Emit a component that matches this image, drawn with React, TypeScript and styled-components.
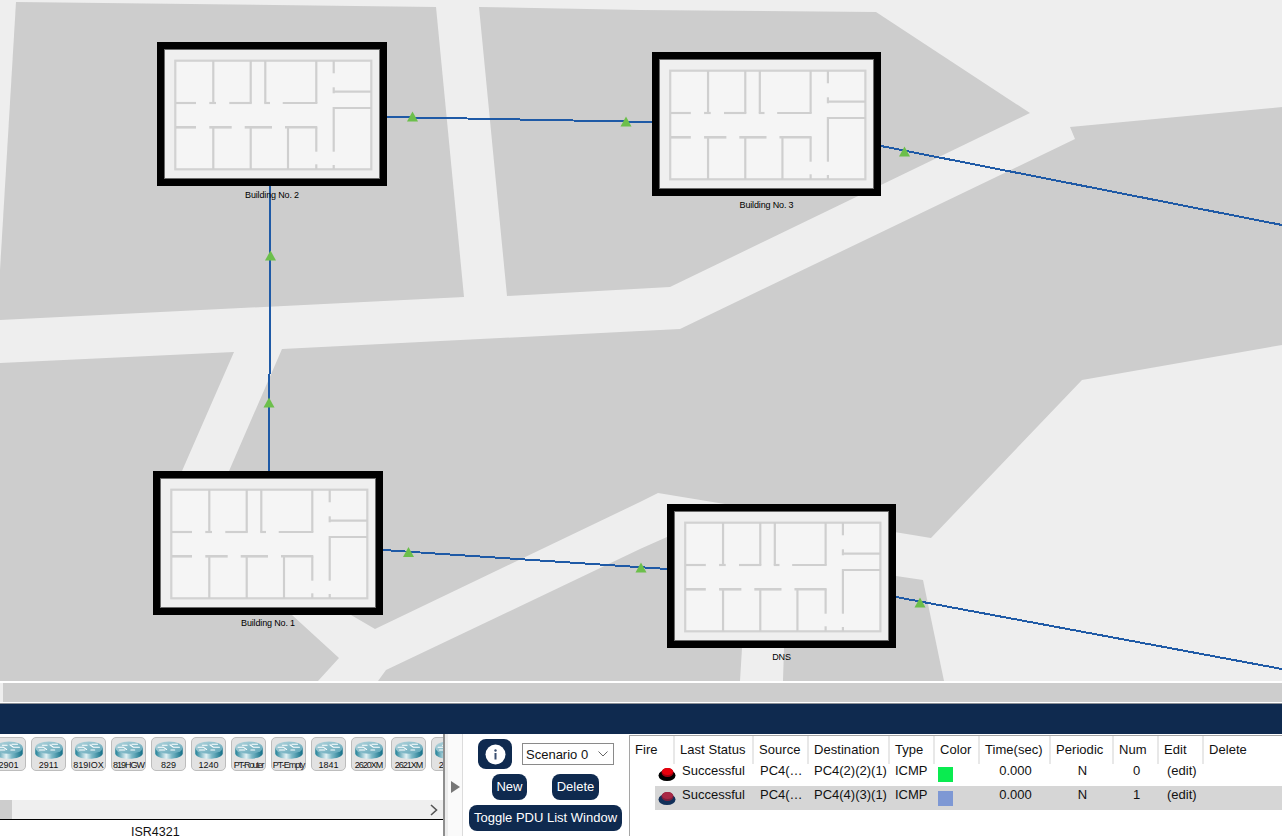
import React from "react";
import styled, { createGlobalStyle } from "styled-components";

const Global = createGlobalStyle`
  html, body { margin: 0; padding: 0; background: #fff; overflow: hidden; }
  * { box-sizing: border-box; }
`;

const Page = styled.div`
  width: 1282px;
  height: 836px;
  display: flex;
  flex-direction: column;
  overflow: hidden;
  font-family: "Liberation Sans", Arial, sans-serif;
  color: #111;
`;

const MapCanvas = styled.div`
  position: relative;
  flex: 0 0 681px;
  background: #eeeeee;
  overflow: hidden;
`;

const MapDrawing = styled.svg`
  position: absolute;
  inset: 0;
  display: block;
`;

const HScroll = styled.div`
  flex: 0 0 20px;
  margin-top: 2px;
  padding-left: 3px;
  background: #eeeeee;
  border-bottom: 1px solid #fff;
`;

const HThumb = styled.div`
  height: 19px;
  background: #cdcdcd;
`;

const NavyBar = styled.div`
  flex: 0 0 31px;
  background: #0f2a4f;
  border-top: 1px solid #8a8f96;
`;

const Bottom = styled.div`
  flex: 1;
  display: flex;
  min-height: 0;
  background: #fff;
`;

const DevicePanel = styled.div`
  flex: 0 0 445px;
  display: flex;
  flex-direction: column;
  border-right: 2px solid #8f8f8f;
  overflow: hidden;
`;

const TileStrip = styled.div`
  flex: 0 0 66px;
  display: flex;
  gap: 5px;
  padding-top: 3px;
  margin-left: -9px;
  overflow: hidden;
`;

const Tile = styled.div`
  flex: 0 0 35px;
  height: 34px;
  border: 1px solid #bdbdbd;
  border-radius: 5px;
  background: #e2e2e2;
  display: flex;
  flex-direction: column;
  align-items: center;
  padding-top: 3px;
`;

const TileLabel = styled.span<{ $squeeze: number }>`
  font-size: 9px;
  line-height: 10px;
  margin-top: 1px;
  white-space: nowrap;
  letter-spacing: ${(p) => p.$squeeze}px;
  color: #111;
`;

const DeviceScroll = styled.div`
  flex: 0 0 20px;
  display: flex;
  justify-content: space-between;
  align-items: center;
  background: #efefef;
  border-bottom: 1px solid #000;
  padding-right: 5px;
`;

const DeviceThumb = styled.div`
  width: 12px;
  height: 19px;
  background: #cdcdcd;
`;

const DeviceName = styled.div`
  flex: 1;
  font-size: 12.5px;
  line-height: 24px;
  padding-left: 131px;
  color: #111;
`;

const Splitter = styled.div`
  flex: 0 0 18px;
  display: flex;
  align-items: center;
  justify-content: center;
  padding-top: 4px;
  margin-right: 3px;
  background: #fafafa;
  border-left: 3px solid #ececec;
  border-right: 1px solid #dcdcdc;
`;

const ScenarioPanel = styled.div`
  flex: 0 0 163px;
  display: flex;
  flex-direction: column;
  padding-top: 5px;
`;

const ScenarioRow = styled.div`
  display: flex;
  align-items: center;
  gap: 10px;
  padding-left: 12px;
`;

const InfoButton = styled.div`
  width: 34px;
  height: 30px;
  border-radius: 8px;
  background: #0f2a4f;
  display: flex;
  align-items: center;
  justify-content: center;
`;

const ScenarioSelect = styled.div`
  width: 92px;
  height: 22px;
  border: 1px solid #8a8a8a;
  display: flex;
  align-items: center;
  justify-content: space-between;
  padding: 0 5px 0 3px;
  font-size: 13px;
`;

const ActionRow = styled.div`
  display: flex;
  gap: 25px;
  margin-top: 5px;
  padding-left: 26px;
`;

const PduButton = styled.div<{ $width: number }>`
  height: 26px;
  width: ${(p) => p.$width}px;
  border-radius: 8px;
  background: #0f2a4f;
  color: #fff;
  font-size: 13px;
  line-height: 26px;
  text-align: center;
  white-space: nowrap;
`;

const ToggleRow = styled.div`
  margin-top: 5px;
  padding-left: 3px;
`;

const TablePanel = styled.div`
  flex: 1;
  margin-top: 1px;
  border-top: 1px solid #a5a5a5;
  border-left: 1px solid #a5a5a5;
  min-width: 0;
`;

const HeaderRow = styled.div`
  display: grid;
  grid-template-columns: 45px 79px 55px 81px 45px 45px 71px 63px 45px 45px 78px;
  height: 26px;
`;

const HeaderCell = styled.div`
  font-size: 13px;
  line-height: 28px;
  letter-spacing: 0.05px;
  padding-left: 5px;
  border-right: 2px solid #e8e8e8;
  white-space: nowrap;
  &:last-child { border-right: 0; }
`;

const PduRow = styled.div<{ $shaded: boolean }>`
  display: grid;
  grid-template-columns: 20px 79px 55px 81px 45px 45px 71px 63px 45px 45px 78px;
  height: 24px;
  margin-left: 25px;
  background: ${(p) => (p.$shaded ? "#d6d6d6" : "transparent")};
`;

const PduCell = styled.div<{ $align?: string; $pad?: number }>`
  font-size: 13px;
  line-height: 17px;
  white-space: nowrap;
  text-align: ${(p) => p.$align || "left"};
  padding-left: ${(p) => p.$pad ?? 6}px;
`;

const FireCell = styled.div`
  padding: 5px 0 0 3px;
`;

const Swatch = styled.div<{ $color: string }>`
  width: 15px;
  height: 15px;
  margin: 5px 0 0 3px;
  background: ${(p) => p.$color};
`;

const Node = styled.div<{ $x: number; $y: number }>`
  position: absolute;
  left: ${(p) => p.$x}px;
  top: ${(p) => p.$y}px;
`;

const Frame = styled.div`
  height: 144px;
`;

const NodeLabel = styled.div<{ $gap: number }>`
  text-align: center;
  font-size: 9px;
  line-height: 11px;
  letter-spacing: -0.15px;
  margin-top: ${(p) => p.$gap}px;
  color: #000;
`;

const pts = (a: number[][]) => a.map((p) => p.join(",")).join(" ");

const blocks: number[][][] = [
  [[16, 2], [436, 7], [464, 297], [0, 320], [0, 270]],
  [[479, 7], [640, 10], [876, 12], [1030, 113], [670, 287], [507, 296]],
  [[282, 349], [640, 331], [680, 329], [1075, 139], [1070, 127], [1282, 107], [1282, 345], [1082, 380], [931, 538], [658, 493], [640, 502], [375, 629], [351, 615], [229, 471]],
  [[0, 363], [234, 352], [182, 471], [292, 615], [339, 658], [318, 681], [0, 681]],
  [[667, 537], [640, 549], [386, 670], [378, 681], [740, 681], [742, 648], [800, 600]],
  [[896, 576], [923, 580], [944, 681], [783, 681], [784, 648], [800, 600]],
];

const links: number[][] = [
  [387, 117, 653, 122],
  [270.5, 186, 269, 471],
  [383, 550, 667, 569],
  [881, 146, 1282, 225],
  [896, 597, 1282, 669],
];

const arrows: number[][] = [
  [412.5, 117], [626, 122], [270.5, 256], [269, 403], [408.5, 552.5], [641, 568], [904.5, 152], [920, 603],
];

const walls: number[][] = [
  [56.3, 18.7, 56.3, 61.3], [93.7, 18.7, 93.7, 61.3], [108.3, 18.7, 108.3, 61.3], [159.3, 18.7, 159.3, 61.3],
  [176.7, 18.7, 176.7, 31.3], [176.7, 45.3, 176.7, 51.3],
  [18.7, 61, 39, 61], [52.3, 61, 59, 61], [72.3, 61, 94.7, 61], [107.3, 61, 113, 61], [125.7, 61, 160.3, 61],
  [176.7, 49.7, 214.3, 49.7], [176.7, 66, 214.3, 66], [176.7, 65, 176.7, 109.7], [176.7, 123, 176.7, 127.3],
  [56.3, 85.3, 56.3, 127.3], [93.7, 85.3, 93.7, 127.3], [131, 85.3, 131, 127.3],
  [159.3, 85.3, 159.3, 109.7], [159.3, 122.3, 159.3, 127.3],
];

const corridorWalls: number[][] = [
  [18.7, 85.3, 39, 85.3], [52.3, 85.3, 74.7, 85.3], [87.7, 85.3, 115, 85.3], [128, 85.3, 160.3, 85.3],
];

const FloorPlan = ({ width }: { width: number }) => (
  <svg width={width} height="144" viewBox="0 0 230 144" preserveAspectRatio="none" style={{ display: "block" }}>
    <rect x="3.5" y="3.5" width="223" height="137" fill="#000" stroke="#000" strokeWidth="7" />
    <rect x="7.5" y="7.5" width="215" height="129" fill="#efefef" stroke="#6a6a6a" strokeWidth="1" />
    <rect x="18.3" y="18.7" width="196" height="108.6" fill="#f5f5f5" stroke="#d2d2d2" strokeWidth="2.2" />
    {walls.map((w, i) => (
      <line key={i} x1={w[0]} y1={w[1]} x2={w[2]} y2={w[3]} stroke="#cfcfcf" strokeWidth="2.2" />
    ))}
    {corridorWalls.map((w, i) => (
      <line key={i} x1={w[0]} y1={w[1]} x2={w[2]} y2={w[3]} stroke="#cfcfcf" strokeWidth="2.6" />
    ))}
  </svg>
);

const buildings = [
  { x: 157, y: 42, w: 230, gap: 4, name: "Building No. 2" },
  { x: 652, y: 52, w: 229, gap: 4, name: "Building No. 3" },
  { x: 153, y: 471, w: 230, gap: 3, name: "Building No. 1" },
  { x: 667, y: 504, w: 229, gap: 4, name: "DNS" },
];

const RouterIcon = () => (
  <svg width="30" height="19" viewBox="0 0 30 19">
    <defs>
      <linearGradient id="routerBody" x1="0" x2="1" y1="0" y2="0">
        <stop offset="0" stopColor="#1f7f96" />
        <stop offset="0.4" stopColor="#e2f1f4" />
        <stop offset="0.6" stopColor="#7db9c7" />
        <stop offset="1" stopColor="#136f87" />
      </linearGradient>
      <linearGradient id="routerTop" x1="0" x2="1" y1="0" y2="1">
        <stop offset="0" stopColor="#b4d4dc" />
        <stop offset="1" stopColor="#5da5b8" />
      </linearGradient>
    </defs>
    <path d="M0.5 7 V13 C0.5 16.6 7 18.8 15 18.8 C23 18.8 29.5 16.6 29.5 13 V7 Z" fill="url(#routerBody)" />
    <ellipse cx="15" cy="7" rx="14.5" ry="6.5" fill="url(#routerTop)" />
    <path d="M3.5 6.5 H9 L12.5 9 M5 9.5 H10.5 M16 4 L19.5 6.5 H26 M18 3.5 H24 M8 4.5 H13 M17 9.5 H21" fill="none" stroke="#fff" strokeWidth="1.1" strokeLinecap="round" />
  </svg>
);

const devices: [string, number][] = [
  ["2901", 0], ["2911", 0], ["819IOX", 0], ["819HGW", -1], ["829", 0], ["1240", 0],
  ["PT-Router", -1.3], ["PT-Empty", -1], ["1841", 0], ["2620XM", -1], ["2621XM", -1], ["2811", 0],
];

const FireIcon = ({ base, top, rim }: { base: string; top: string; rim: string }) => (
  <svg width="18" height="14" viewBox="0 0 18 14">
    <ellipse cx="9" cy="8.5" rx="8.5" ry="5.5" fill={base} />
    <ellipse cx="9.5" cy="5.5" rx="6" ry="4.5" fill={rim} />
    <ellipse cx="9.5" cy="4.5" rx="5.5" ry="3.5" fill={top} />
  </svg>
);

const rows = [
  { status: "Successful", src: "PC4(…", dst: "PC4(2)(2)(1)", color: "#0aeb50", num: "0", base: "#000", top: "#e8000c", rim: "#a00010" },
  { status: "Successful", src: "PC4(…", dst: "PC4(4)(3)(1)", color: "#7e98d4", num: "1", base: "#12305a", top: "#a82845", rim: "#7c1f3c" },
];

const headers = ["Fire", "Last Status", "Source", "Destination", "Type", "Color", "Time(sec)", "Periodic", "Num", "Edit", "Delete"];

export default function App() {
  return (
    <Page>
      <Global />
      <MapCanvas>
        <MapDrawing width="1282" height="681" viewBox="0 0 1282 681">
          {blocks.map((b, i) => (
            <polygon key={i} points={pts(b)} fill="#cdcdcd" />
          ))}
          {links.map((l, i) => (
            <line key={i} x1={l[0]} y1={l[1]} x2={l[2]} y2={l[3]} stroke="#1f5aa6" strokeWidth="2" shapeRendering="crispEdges" />
          ))}
          {arrows.map((a, i) => (
            <polygon
              key={i}
              points={pts([[a[0], a[1] - 5.5], [a[0] + 5.5, a[1] + 4.5], [a[0] - 5.5, a[1] + 4.5]])}
              fill="#6cbf4b"
            />
          ))}
        </MapDrawing>
        {buildings.map((b) => (
          <Node key={b.name} $x={b.x} $y={b.y}>
            <Frame>
              <FloorPlan width={b.w} />
            </Frame>
            <NodeLabel $gap={b.gap}>{b.name}</NodeLabel>
          </Node>
        ))}
      </MapCanvas>
      <HScroll>
        <HThumb />
      </HScroll>
      <NavyBar />
      <Bottom>
        <DevicePanel>
          <TileStrip>
            {devices.map(([name, squeeze]) => (
              <Tile key={name}>
                <RouterIcon />
                <TileLabel $squeeze={squeeze}>{name}</TileLabel>
              </Tile>
            ))}
          </TileStrip>
          <DeviceScroll>
            <DeviceThumb />
            <svg width="8" height="12" viewBox="0 0 8 12">
              <path d="M1 1 L6.5 6 L1 11" fill="none" stroke="#555" strokeWidth="1.6" />
            </svg>
          </DeviceScroll>
          <DeviceName>ISR4321</DeviceName>
        </DevicePanel>
        <Splitter>
          <svg width="9" height="12" viewBox="0 0 9 12">
            <polygon points="0,0 9,6 0,12" fill="#777" />
          </svg>
        </Splitter>
        <ScenarioPanel>
          <ScenarioRow>
            <InfoButton>
              <svg width="21" height="21" viewBox="0 0 21 21">
                <circle cx="10.5" cy="10.5" r="10" fill="#fff" />
                <circle cx="10.5" cy="6.5" r="1.2" fill="#3a4f70" />
                <rect x="9.5" y="9" width="2" height="6.5" fill="#3a4f70" />
              </svg>
            </InfoButton>
            <ScenarioSelect>
              Scenario 0
              <svg width="10" height="6" viewBox="0 0 10 6">
                <path d="M0.5 0.5 L5 5 L9.5 0.5" fill="none" stroke="#666" strokeWidth="1" />
              </svg>
            </ScenarioSelect>
          </ScenarioRow>
          <ActionRow>
            <PduButton $width={35}>New</PduButton>
            <PduButton $width={47}>Delete</PduButton>
          </ActionRow>
          <ToggleRow>
            <PduButton $width={153}>Toggle PDU List Window</PduButton>
          </ToggleRow>
        </ScenarioPanel>
        <TablePanel>
          <HeaderRow>
            {headers.map((h) => (
              <HeaderCell key={h}>{h}</HeaderCell>
            ))}
          </HeaderRow>
          {rows.map((r, i) => (
            <PduRow key={r.num} $shaded={i === 1}>
              <FireCell>
                <FireIcon base={r.base} top={r.top} rim={r.rim} />
              </FireCell>
              <PduCell $pad={7}>{r.status}</PduCell>
              <PduCell $pad={6}>{r.src}</PduCell>
              <PduCell $pad={5}>{r.dst}</PduCell>
              <PduCell $pad={5}>ICMP</PduCell>
              <Swatch $color={r.color} />
              <PduCell $align="center" $pad={0}>0.000</PduCell>
              <PduCell $align="center" $pad={0}>N</PduCell>
              <PduCell $align="center" $pad={0}>{r.num}</PduCell>
              <PduCell $pad={8}>(edit)</PduCell>
              <PduCell />
            </PduRow>
          ))}
        </TablePanel>
      </Bottom>
    </Page>
  );
}
